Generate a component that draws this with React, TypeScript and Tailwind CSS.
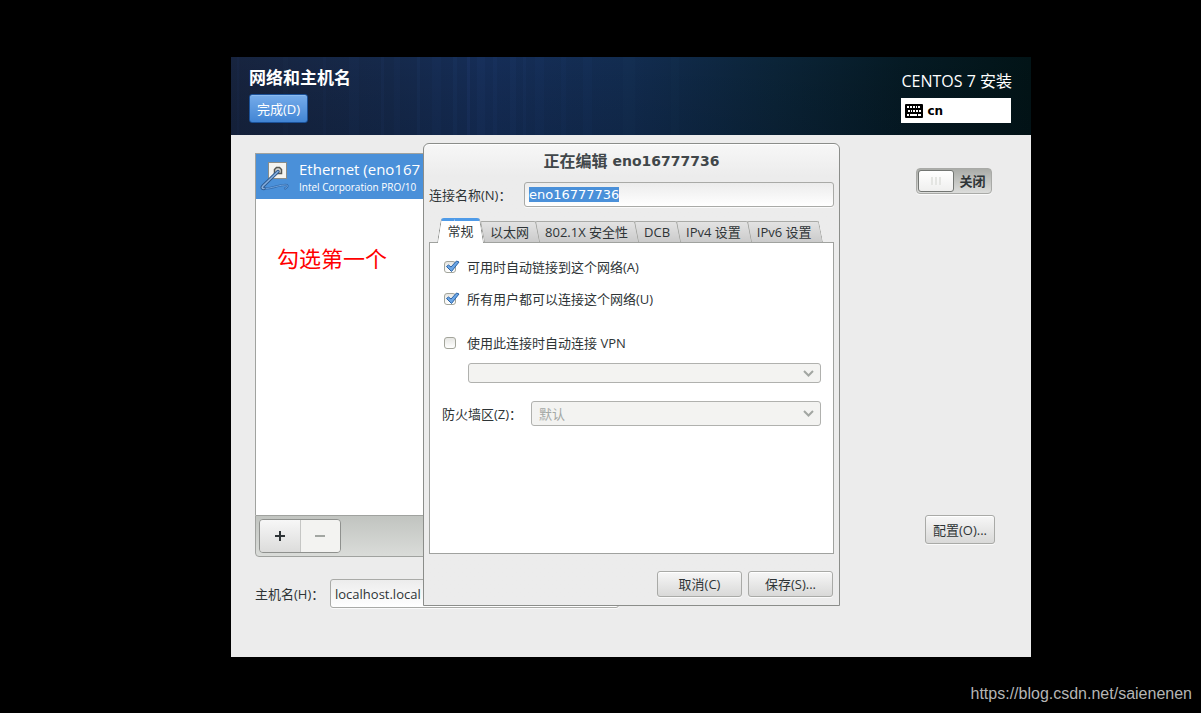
import type { ReactNode } from "react";

const ENTRY =
  "rounded-[3px] border border-[#a9aaa7] bg-linear-to-b from-[#ececec] to-white shadow-[0_1px_0_#fafafa] outline-none text-[#2e3436]";
const BUTTON =
  "rounded-[3px] border border-[#a9aaa7] bg-linear-to-b from-[#f7f7f7] to-[#d9d9d8] shadow-[0_1px_0_#fafafa,inset_0_1px_0_#ffffff] text-[13px] leading-5 text-[#2e3436]";

function Streaks() {
  const bands = [
    [6, 2, 0.03], [52, 5, 0.02], [92, 3, 0.03], [118, 10, 0.03], [150, 3, 0.04], [163, 6, 0.03],
    [186, 3, 0.05], [201, 9, 0.03], [222, 4, 0.05], [236, 3, 0.07], [246, 8, 0.04], [262, 4, 0.04],
    [279, 6, 0.04], [292, 3, 0.04], [304, 9, 0.03], [330, 5, 0.03], [352, 9, 0.03], [392, 12, 0.02], [440, 8, 0.02],
  ];
  return (
    <svg className="absolute inset-0 h-full w-full" viewBox="0 0 800 78" preserveAspectRatio="none" aria-hidden="true">
      <defs>
        <linearGradient id="sky" x1="0" y1="0" x2="1" y2="0">
          <stop offset="0" stopColor="#17243f" />
          <stop offset="0.2" stopColor="#15294b" />
          <stop offset="0.32" stopColor="#152d57" />
          <stop offset="0.5" stopColor="#122c50" />
          <stop offset="0.68" stopColor="#0b2438" />
          <stop offset="0.84" stopColor="#051a24" />
          <stop offset="1" stopColor="#021417" />
        </linearGradient>
        <linearGradient id="fade" x1="0" y1="0" x2="0" y2="1">
          <stop offset="0" stopColor="#000" stopOpacity="0" />
          <stop offset="1" stopColor="#000814" stopOpacity="0.15" />
        </linearGradient>
      </defs>
      <rect width="800" height="78" fill="url(#sky)" />
      {bands.map(([x, w, o]) => (
        <rect key={x} x={x} width={w} height="78" fill="#4f86e0" opacity={o} />
      ))}
      <rect width="800" height="78" fill="url(#fade)" />
    </svg>
  );
}

function KeyboardIcon() {
  return (
    <svg width="18" height="14" viewBox="0 0 18 14" aria-hidden="true">
      <rect width="18" height="14" rx="1" fill="#000" />
      <path
        fill="#fff"
        d="M2 2h2v2H2zM5 2h2v2H5zM8 2h2v2H8zM11 2h1v2h-1zM13 2h2v2h-2zM3 6h2v2H3zM6 6h1v2H6zM8 6h2v2H8zM11 6h2v2h-2zM14 6h2v2h-2zM2 10h2v2H2zM5 10h7v2H5zM13 10h3v2h-3z"
      />
    </svg>
  );
}

function EthernetIcon() {
  return (
    <svg width="32" height="32" viewBox="0 0 32 32" fill="none" aria-hidden="true">
      <rect x="8.500" y="1.500" width="18" height="16" fill="#f4f4f1" stroke="#8b8d88" />
      <path d="M14.500 12.500V8.500l2-2h3l2 2v4z" fill="#d5d6d2" stroke="#555753" strokeWidth="1.500" />
      <path d="M3 27c4 2 14-2.500 21-3 4-.3 5 1 1 3.500" stroke="#2f69ac" strokeWidth="2.200" strokeLinecap="round" />
      <path d="M3 27c4 2 14-2.500 21-3 4-.3 5 1 1 3.500" stroke="#7fb0e6" strokeWidth="0.800" strokeLinecap="round" />
      <path d="M18 10.500L3 25c-1 1-1.500 2.500 1 2.500" stroke="#2e5a8f" strokeWidth="3.400" strokeLinecap="round" />
      <path d="M18 10.500L3 25c-1 1-1.500 2.500 1 2.500" stroke="#86aedc" strokeWidth="1.600" strokeLinecap="round" />
    </svg>
  );
}

function Check({ id, checked, children }: { id: string; checked?: boolean; children: ReactNode }) {
  return (
    <div className="flex h-5 items-center gap-[11px]">
      <span className="relative flex">
        <input
          id={id}
          type="checkbox"
          defaultChecked={checked}
          className="peer size-3 appearance-none rounded-[3px] border border-[#a3a59b] bg-linear-to-b from-[#e6e6e3] to-white"
        />
        <svg
          className="pointer-events-none absolute -top-px left-px hidden peer-checked:block"
          width="15"
          height="13"
          viewBox="0 0 15 13"
          aria-hidden="true"
        >
          <path d="M1.500 6.500l2-1.500 2.500 2L11.500 1l2.500 1L6.500 11.500z" fill="#6ba6e6" stroke="#2a62a5" strokeLinejoin="round" />
        </svg>
      </span>
      <label htmlFor={id}>{children}</label>
    </div>
  );
}

function Combo({ id, value, label, className }: { id: string; value: string; label?: string; className: string }) {
  return (
    <span className="relative flex flex-1">
      <select
        id={id}
        disabled
        aria-label={label}
        className={`w-full appearance-none rounded-[3px] border border-[#b0b1ae] bg-[#f3f3f1] px-[7px] text-[13px] text-[#a4a8a5] opacity-100 ${className}`}
      >
        <option>{value}</option>
      </select>
      <svg className="pointer-events-none absolute inset-y-0 right-[7px] my-auto" width="11" height="7" viewBox="0 0 11 7" fill="none" aria-hidden="true">
        <path d="M1 1l4.500 4.500L10 1" stroke="#a2a6a2" strokeWidth="2" />
      </svg>
    </span>
  );
}

function Tab({ children }: { children: ReactNode }) {
  return (
    <button
      type="button"
      role="tab"
      aria-selected="false"
      className="relative h-[21px] px-2 before:absolute before:inset-y-0 before:-right-px before:left-0 before:skew-x-[11deg] before:rounded-t-[2px] before:border before:border-b-0 before:border-[#a9aaa7] before:bg-linear-to-b before:from-[#e3e3e3] before:to-[#cbcbcb]"
    >
      <span className="relative">{children}</span>
    </button>
  );
}

function EditDialog() {
  return (
    <div
      role="dialog"
      aria-labelledby="dialog-title"
      className="absolute top-[86px] left-[192px] flex h-[463px] w-[417px] flex-col rounded-t-[6px] border border-[#8b8d8a] bg-[#ececec] bg-linear-to-b from-[#f7f7f7] to-[#ececec] to-[32px] px-[5px] shadow-[inset_0_1px_0_#ffffff]"
    >
      <h2 id="dialog-title" className="flex h-[38px] items-center justify-center gap-[5px] pb-1 font-bold text-[#41474a]">
        <span className="text-[16px]">正在编辑</span>
        <span className="font-['DejaVu_Sans',sans-serif] text-[14px]">eno16777736</span>
      </h2>
      <div className="flex items-center">
        <label htmlFor="conn-name" className="w-[95px]">连接名称(N)：</label>
        <div className={`flex h-[25px] flex-1 items-center px-1 ${ENTRY}`}>
          <input
            id="conn-name"
            defaultValue="eno16777736"
            className="w-[90px] bg-[#4a90d9] font-['DejaVu_Sans',sans-serif] text-[13px] leading-[15px] text-white outline-none"
          />
        </div>
      </div>

      <div role="tablist" className="mt-[11px] flex h-6 items-end pl-[10px]">
        <button
          type="button"
          role="tab"
          aria-selected="true"
          className="relative z-10 -mb-px h-[25px] w-[43px] before:absolute before:inset-y-0 before:left-0 before:w-[60%] before:-skew-x-[9deg] before:rounded-tl-[3px] before:border-t-3 before:border-l before:border-t-[#4f9be8] before:border-l-[#8b8d8a] before:bg-white after:absolute after:inset-y-0 after:right-0 after:w-[60%] after:skew-x-[9deg] after:rounded-tr-[3px] after:border-t-3 after:border-r after:border-t-[#4f9be8] after:border-r-[#8b8d8a] after:bg-white"
        >
          <span className="relative z-10">常规</span>
        </button>
        <Tab>以太网</Tab>
        <Tab>802.1X 安全性</Tab>
        <Tab>DCB</Tab>
        <Tab>IPv4 设置</Tab>
        <Tab>IPv6 设置</Tab>
      </div>

      <div role="tabpanel" className="flex h-[312px] flex-col border border-[#a0a29f] bg-white px-3 pt-[14px]">
        <div className="flex flex-col gap-3 pl-[2px]">
          <Check id="auto" checked>可用时自动链接到这个网络(A)</Check>
          <Check id="all-users" checked>所有用户都可以连接这个网络(U)</Check>
        </div>
        <div className="mt-6 pl-[2px]">
          <Check id="vpn">使用此连接时自动连接 VPN</Check>
        </div>
        <div className="mt-[10px] flex pl-[26px]">
          <Combo id="vpn-list" value="" label="VPN" className="h-5" />
        </div>
        <div className="mt-[18px] flex items-center">
          <label htmlFor="zone" className="w-[89px]">防火墙区(Z)：</label>
          <Combo id="zone" value="默认" className="h-[25px]" />
        </div>
      </div>

      <div className="mt-[17px] flex justify-end gap-[6px] pr-px">
        <button type="button" className={`h-[26px] w-[85px] ${BUTTON}`}>取消(C)</button>
        <button type="button" className={`h-[26px] w-[85px] ${BUTTON}`}>保存(S)...</button>
      </div>
    </div>
  );
}

export default function App() {
  return (
    <div className="flex min-h-screen flex-col bg-black pt-[57px] font-['Open_Sans','Noto_Sans_CJK_SC',sans-serif] text-[13px] leading-5 text-[#2e3436]">
      <main className="relative mr-[170px] ml-[231px] flex flex-1 flex-col bg-[#ececec]">
        <header className="relative flex h-[78px] justify-between pr-[19px] pl-[18px] text-white">
          <Streaks />
          <div className="relative flex flex-col items-start pt-[9px]">
            <h1 className="text-[17px] leading-6 font-bold">网络和主机名</h1>
            <button
              type="button"
              className="mt-1 h-[29px] rounded-[3px] border border-[#1c5299] bg-linear-to-b from-[#76acea] to-[#4185d4] px-[7px] text-white shadow-[inset_0_1px_0_#8dbcf0]"
            >
              完成(D)
            </button>
          </div>
          <div className="relative flex flex-col items-start pt-3">
            <span className="text-[16px] leading-6">CENTOS 7 安装</span>
            <div className="mt-[5px] flex h-[25px] w-[110px] items-center gap-1 bg-white px-1 text-black">
              <KeyboardIcon />
              <span className="font-['DejaVu_Sans',sans-serif] text-[12px] font-bold">cn</span>
            </div>
          </div>
        </header>

        <div className="flex flex-1 justify-between pt-[18px] pr-[36px] pl-[24px]">
          <section className="flex w-[364px] flex-col">
            <div className="flex h-[362px] flex-col border border-b-0 border-[#a0a29f] bg-white">
              <div className="flex h-[45px] items-center gap-[7px] bg-[#4a90d9] pl-1 text-white">
                <EthernetIcon />
                <div className="flex flex-col">
                  <span className="text-[15px] leading-5">Ethernet (eno167</span>
                  <span className="text-[10px] leading-4">Intel Corporation PRO/10</span>
                </div>
              </div>
              <p className="pt-[43px] pl-[21px] text-[22px] leading-8 text-[#ff0000]">勾选第一个</p>
            </div>
            <div className="flex h-[42px] items-center rounded-b-[4px] border border-[#a0a29f] bg-linear-to-b from-[#c1c4c0] to-[#dadcd9] px-[3px]">
              <div className="flex h-[34px] w-[82px] overflow-hidden rounded-[4px] border border-[#8f918e]">
                <button type="button" aria-label="+" className="flex flex-1 items-center justify-center border-r border-[#c5c6c4] bg-linear-to-b from-[#f7f7f7] to-[#dcdcdb]">
                  <svg width="10" height="10" viewBox="0 0 10 10" aria-hidden="true"><path d="M4 0h2v4h4v2H6v4H4V6H0V4h4z" fill="#2e3436" /></svg>
                </button>
                <button type="button" disabled aria-label="−" className="flex flex-1 items-center justify-center bg-[#f3f3f1]">
                  <svg width="10" height="2" viewBox="0 0 10 2" aria-hidden="true"><path d="M0 0h10v2H0z" fill="#a2a6a2" /></svg>
                </button>
              </div>
            </div>
            <div className="mt-[22px] flex items-center">
              <label htmlFor="host" className="w-[75px]">主机名(H)：</label>
              <input id="host" defaultValue="localhost.local" className={`h-[29px] w-0 flex-1 px-1 ${ENTRY}`} />
            </div>
          </section>

          <section className="flex flex-col items-end pt-[15px]">
            <button
              type="button"
              role="switch"
              aria-checked="false"
              className="mr-[3px] flex h-[26px] w-[76px] items-center rounded-[4px] border border-[#a9aaa7] bg-linear-to-b from-[#aaaca8] to-[#dcdddb] pl-px font-bold shadow-[0_1px_0_#fafafa]"
            >
              <span className="flex h-[22px] w-[36px] items-center justify-center gap-[2px] rounded-[3px] border border-[#737673] bg-linear-to-b from-white to-[#efefee]">
                <span className="h-2 w-[2px] bg-[#e4e5e2]" />
                <span className="h-2 w-[2px] bg-[#e4e5e2]" />
                <span className="h-2 w-[2px] bg-[#e4e5e2]" />
              </span>
              <span className="flex-1">关闭</span>
            </button>
            <button type="button" className={`mt-[321px] h-[29px] px-[7px] ${BUTTON}`}>配置(O)...</button>
          </section>
        </div>
        <EditDialog />
      </main>
      <footer className="flex h-[56px] items-center justify-end pt-[17px] pr-[9px] font-['Liberation_Sans',sans-serif] text-[16px] text-[#b5b5b5]">
        https://blog.csdn.net/saienenen
      </footer>
    </div>
  );
}
